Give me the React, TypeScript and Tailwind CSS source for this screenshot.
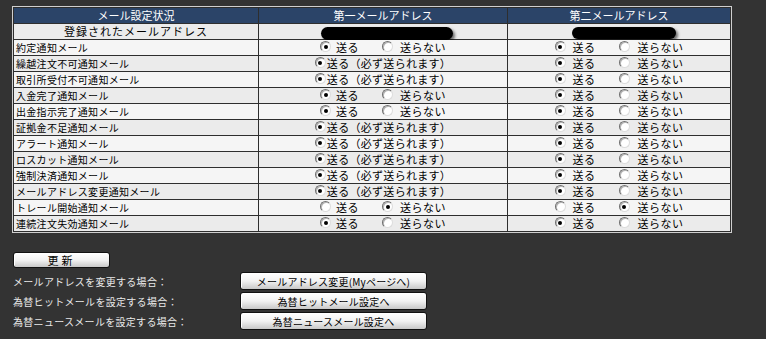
import React from "react";

type Mode = "normal" | "forced";
interface Row {
  label: string;
  mode: Mode;
  c2: boolean; // true = send
  c3: boolean;
}

const rows: Row[] = [
  { label: "約定通知メール", mode: "normal", c2: true, c3: true },
  { label: "繰越注文不可通知メール", mode: "forced", c2: true, c3: true },
  { label: "取引所受付不可通知メール", mode: "forced", c2: true, c3: true },
  { label: "入金完了通知メール", mode: "normal", c2: true, c3: true },
  { label: "出金指示完了通知メール", mode: "normal", c2: true, c3: true },
  { label: "証拠金不足通知メール", mode: "forced", c2: true, c3: true },
  { label: "アラート通知メール", mode: "forced", c2: true, c3: true },
  { label: "ロスカット通知メール", mode: "forced", c2: true, c3: true },
  { label: "強制決済通知メール", mode: "forced", c2: true, c3: true },
  { label: "メールアドレス変更通知メール", mode: "forced", c2: true, c3: true },
  { label: "トレール開始通知メール", mode: "normal", c2: false, c3: false },
  { label: "連続注文失効通知メール", mode: "normal", c2: true, c3: true },
];

function Radio({ checked }: { checked: boolean }) {
  return (
    <span className="inline-flex h-[11px] w-[11px] shrink-0 -mt-[2px] items-center justify-center rounded-full border border-t-[#6f6f6f] border-l-[#6f6f6f] border-r-[#dcdcdc] border-b-[#dcdcdc] bg-white shadow-[inset_1px_1px_0_#b5b5b5]">
      {checked && <span className="h-[4px] w-[4px] rounded-full bg-black" />}
    </span>
  );
}

function Choice({ send, wide }: { send: boolean; wide: boolean }) {
  return (
    <div className="flex items-center justify-center tracking-[0.5px]">
      <Radio checked={send} />
      <span className={wide ? "ml-[7px]" : "ml-[5px]"}>送る</span>
      <span className="ml-[23px] flex items-center">
        <Radio checked={!send} />
      </span>
      <span className={wide ? "ml-[8px]" : "ml-[7px]"}>送らない</span>
    </div>
  );
}

function Forced() {
  return (
    <div className="flex items-center justify-center tracking-[0.3px]">
      <Radio checked={true} />
      <span className="ml-[1px]">送る（必ず送られます）</span>
    </div>
  );
}

const cell = "h-[16px] border-r border-b border-[#2e2e2e] flex items-center";

function Button({ children, className }: { children: React.ReactNode; className: string }) {
  return (
    <div
      className={
        "flex items-center justify-center rounded-[3px] border border-[#111] bg-gradient-to-b from-white via-[#f2f2f2] to-[#c8c8c8] text-black text-[10px] shadow-[inset_1px_1px_0_#ffffff] " +
        className
      }
    >
      {children}
    </div>
  );
}

export default function App() {
  return (
    <div
      className="w-[766px] h-[339px] bg-[#333333] overflow-hidden text-[11px] leading-[15px] text-black"
      style={{ fontFamily: '"Noto Sans CJK JP", "Noto Sans", sans-serif' }}
    >
      <div className="pt-[6px] pl-[12px]">
        <div className="w-[720px] border border-[#cfcfcf]">
          <div className="grid grid-cols-[245px_249px_223px] border-t border-l border-[#2e2e2e]">
            {/* header */}
            <div className={cell + " justify-center bg-[#2b4468] text-white"}>メール設定状況</div>
            <div className={cell + " justify-center bg-[#2b4468] text-white"}>第一メールアドレス</div>
            <div className={cell + " justify-center bg-[#2b4468] text-white"}>第二メールアドレス</div>

            {/* address row */}
            <div className={cell + " justify-center bg-[#ebebeb] tracking-[1px]"}>登録されたメールアドレス</div>
            <div className={cell + " bg-[#ebebeb] pl-[62px]"}>
              <div className="mt-[3px] h-[13px] w-[132px] rounded-full bg-black shadow-[2px_2px_3px_rgba(0,0,0,0.55)]" />
            </div>
            <div className={cell + " bg-[#ebebeb] pl-[64px]"}>
              <div className="mt-[2px] h-[12px] w-[104px] rounded-full bg-black shadow-[2px_2px_3px_rgba(0,0,0,0.55)]" />
            </div>

            {rows.map((r, i) => {
              const bg = i % 2 === 0 ? "bg-[#f5f5f5]" : "bg-[#ebebeb]";
              return (
                <React.Fragment key={r.label}>
                  <div className={cell + " pl-[2px] text-[10px] tracking-[0.3px] " + bg}>{r.label}</div>
                  <div className={cell + " justify-center " + bg}>
                    {r.mode === "forced" ? <Forced /> : <Choice send={r.c2} wide={false} />}
                  </div>
                  <div className={cell + " justify-center " + bg}>
                    <Choice send={r.c3} wide={true} />
                  </div>
                </React.Fragment>
              );
            })}
          </div>
        </div>
      </div>

      <div className="pl-[13px] pt-[19px]">
        <Button className="h-[16px] w-[97px] tracking-[3px] text-[11px]">更新</Button>
        <div className="mt-[4px] grid grid-cols-[227px_187px] gap-y-[2px] text-[10px] text-[#e8e8e8] tracking-[0.3px]">
          <div className="flex h-[18px] items-center">メールアドレスを変更する場合：</div>
          <Button className="h-[18px] w-[187px] tracking-[0.2px]">メールアドレス変更(Myページへ)</Button>
          <div className="flex h-[18px] items-center">為替ヒットメールを設定する場合：</div>
          <Button className="h-[18px] w-[187px] tracking-[0.2px]">為替ヒットメール設定へ</Button>
          <div className="flex h-[18px] items-center">為替ニュースメールを設定する場合：</div>
          <Button className="h-[18px] w-[187px] tracking-[0.2px]">為替ニュースメール設定へ</Button>
        </div>
      </div>
    </div>
  );
}
